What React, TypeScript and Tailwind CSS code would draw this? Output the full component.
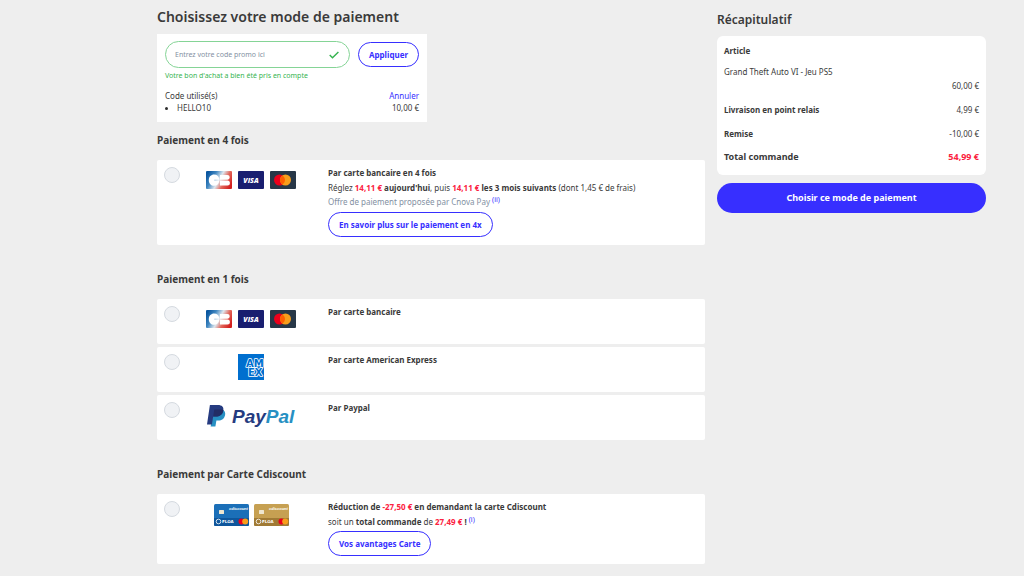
import type { ReactNode } from "react";

const pillClass =
  "h-[25px] rounded-full border border-[#372fff] bg-white px-2.5 text-[8px] font-bold text-[#372fff]";

function CbLogo() {
  return (
    <svg viewBox="0 0 26 18" className="h-[18px] w-[26px]" role="img" aria-label="CB">
      <defs>
        <linearGradient id="cb-bg" x1="0" y1="0.3" x2="1" y2="0.7">
          <stop offset="0" stopColor="#0b57a0" />
          <stop offset="0.25" stopColor="#3f86c0" />
          <stop offset="0.5" stopColor="#dfe7ee" />
          <stop offset="0.72" stopColor="#e2665a" />
          <stop offset="1" stopColor="#d3201f" />
        </linearGradient>
      </defs>
      <rect width="26" height="18" rx="1" fill="url(#cb-bg)" />
      <path d="M13.2 8.7H8.3v.8h4.9v.5c-.2 2.9-2.3 4.8-5.1 4.8-3 0-5.3-2.2-5.3-5.6s2.3-5.6 5.3-5.6c2.900 0 4.900 1.900 5.100 4.700z" fill="#fff" />
      <path d="M14 4h7.400a2.300 2.300 0 0 1 0 4.700H14zM14 9.500h7.400a2.500 2.500 0 0 1 0 5H14z" fill="#fff" />
    </svg>
  );
}

function VisaLogo() {
  return (
    <svg viewBox="0 0 26 18" className="h-[18px] w-[26px]" role="img" aria-label="Visa">
      <rect width="26" height="18" rx="1" fill="#191e70" />
      <text x="13" y="12" textAnchor="middle" fontSize="7" fontWeight="800" fontStyle="italic" fill="#fff" fontFamily="Open Sans, sans-serif">
        VISA
      </text>
    </svg>
  );
}

function MastercardLogo() {
  return (
    <svg viewBox="0 0 26 18" className="h-[18px] w-[26px]" role="img" aria-label="Mastercard">
      <rect width="26" height="18" rx="1" fill="#273747" />
      <circle cx="9.500" cy="9" r="5.500" fill="#eb001b" />
      <circle cx="15.500" cy="9" r="5.500" fill="#f79e1b" />
      <path d="M12.500 4.400a5.500 5.500 0 0 1 0 9.200a5.500 5.500 0 0 1 0-9.200z" fill="#ff5f00" />
    </svg>
  );
}

function BankCards() {
  return (
    <div className="flex gap-[6px]">
      <CbLogo />
      <VisaLogo />
      <MastercardLogo />
    </div>
  );
}

function AmexLogo() {
  return (
    <svg viewBox="0 0 26 26" className="size-[26px]" role="img" aria-label="American Express">
      <rect width="26" height="26" fill="#006fcf" />
      <g fontFamily="DejaVu Sans, sans-serif" fontWeight="700" fontSize="10" fill="#006fcf" stroke="#fff" strokeWidth="1.500" strokeLinejoin="round" paintOrder="stroke">
        <text x="8" y="12.500">AM</text>
        <text x="10" y="21.500">EX</text>
      </g>
    </svg>
  );
}

function PaypalLogo() {
  return (
    <svg viewBox="0 0 90 24" className="h-6 w-[90px]" role="img" aria-label="PayPal">
      <path d="M8 5.500h8.200c2.600 1.200 3.400 3.200 2.900 5.600-.8 3.900-3.400 5.500-6.700 5.500h-2l-1 6H4.600z" fill="#2790c3" />
      <path d="M3.900 1h8c4.100 0 6.100 2.100 5.400 5.500-.8 4-3.700 6-7.600 6H7.200L5.900 20.500H1z" fill="#253b80" />
      <path d="M8.300 5.500h7.900c.4.200.8.500 1.100.9-.6 4.100-3.600 6.100-7.600 6.100H7.200z" fill="#222d65" />
      <text x="26" y="19" fontSize="19" fontWeight="700" fontStyle="italic" fontFamily="Liberation Sans, sans-serif" fill="#253b80">
        Pay<tspan fill="#2790c3">Pal</tspan>
      </text>
    </svg>
  );
}

interface FloaCardProps {
  color: string;
  band: string;
}

function FloaCard({ color, band }: FloaCardProps) {
  return (
    <svg viewBox="0 0 35 22" className="h-[22px] w-[35px]" role="img" aria-label="Carte Cdiscount">
      <rect width="35" height="22" rx="1.500" fill={color} />
      <path d="M0 14h35v6.500a1.500 1.500 0 0 1-1.500 1.500h-32a1.500 1.500 0 0 1-1.500-1.500z" fill={band} />
      <rect x="5" y="6" width="5" height="4" rx="0.500" fill="#eee6d0" />
      <text x="15" y="6" fontSize="4" fontWeight="700" fontStyle="italic" fill="#fff" fontFamily="Liberation Sans, sans-serif">
        cdiscount
      </text>
      <circle cx="4.500" cy="17.500" r="2.300" fill="none" stroke="#fff" strokeWidth="0.800" />
      <text x="8" y="19" fontSize="4" fontWeight="700" fill="#fff" fontFamily="DejaVu Sans, sans-serif">
        FLOA
      </text>
      <circle cx="27.500" cy="17.500" r="3" fill="#eb001b" />
      <circle cx="31.200" cy="17.500" r="3" fill="#f79e1b" />
    </svg>
  );
}

interface OptionProps {
  id: string;
  logo: ReactNode;
  logoClass: string;
  title: ReactNode;
  className?: string;
  children?: ReactNode;
}

function PaymentOption({ id, logo, logoClass, title, className = "min-h-[45px]", children }: OptionProps) {
  return (
    <div className={`flex items-start rounded-xs bg-white px-[7px] ${className}`}>
      <input
        type="radio"
        id={id}
        name="payment"
        className="mt-[7px] size-4 shrink-0 appearance-none rounded-full border border-[#d5dae0] bg-[#f0f2f5] checked:border-4 checked:border-[#372fff]"
      />
      <div className={`ml-[26px] flex w-[90px] shrink-0 justify-center ${logoClass}`}>{logo}</div>
      <div className="ml-8 flex-1 pt-[7px] text-[8px]">
        <label htmlFor={id} className="block leading-3 font-bold">
          {title}
        </label>
        {children}
      </div>
    </div>
  );
}

function SectionTitle({ children }: { children: ReactNode }) {
  return <h2 className="mb-2.5 text-[10px] leading-5 font-bold">{children}</h2>;
}

function PromoCode() {
  return (
    <section className="w-[270px] bg-white px-2 pt-[7px] pb-2 text-[8px] leading-3">
      <form className="flex items-center gap-2" onSubmit={(e) => e.preventDefault()}>
        <div className="relative flex-1">
          <input
            type="text"
            aria-label="Code promo"
            placeholder="Entrez votre code promo ici"
            className="block h-[27px] w-full rounded-full border border-[#85d496] bg-white px-[9px] text-[7px] outline-none placeholder:text-[#8390a2]"
          />
          <svg viewBox="0 0 10 8" className="absolute top-[10px] right-[11px] h-2 w-2.5" fill="none" stroke="#35b34f" strokeWidth="1.400" aria-hidden="true">
            <path d="M.7 4l2.800 2.800L9.400.9" />
          </svg>
        </div>
        <button type="submit" className={pillClass}>
          Appliquer
        </button>
      </form>
      <p className="mt-0.5 text-[7px] text-[#35b34f]">Votre bon d'achat a bien été pris en compte</p>
      <div className="mt-2 flex justify-between">
        <span>Code utilisé(s)</span>
        <button type="button" className="text-[#372fff]">
          Annuler
        </button>
      </div>
      <ul className="flex">
        <li className="flex flex-1 items-center gap-[9px]">
          <span className="size-[3px] rounded-full bg-[#2d2d2d]" />
          HELLO10
        </li>
        <li>10,00 €</li>
      </ul>
    </section>
  );
}

function Summary() {
  return (
    <aside className="w-[269px] shrink-0 pt-2.5">
      <h2 className="text-[12px] leading-5 font-semibold">Récapitulatif</h2>
      <dl className="mt-1.5 rounded-md bg-white px-[7px] pt-[9px] pb-3 text-[8px] leading-3">
        <dt className="font-bold">Article</dt>
        <dd className="mt-[9px]">Grand Theft Auto VI - Jeu PS5</dd>
        <dd className="mt-0.5 text-right">60,00 €</dd>
        <div className="mt-3 flex justify-between">
          <dt className="font-bold">Livraison en point relais</dt>
          <dd>4,99 €</dd>
        </div>
        <div className="mt-3 flex justify-between">
          <dt className="font-bold">Remise</dt>
          <dd>-10,00 €</dd>
        </div>
        <div className="mt-[11px] flex justify-between text-[9px] font-bold">
          <dt>Total commande</dt>
          <dd className="text-[#fb2240]">54,99 €</dd>
        </div>
      </dl>
      <button type="button" className="mt-2 h-[30px] w-full rounded-full bg-[#372fff] text-[9px] font-bold text-white">
        Choisir ce mode de paiement
      </button>
    </aside>
  );
}

export default function App() {
  return (
    <div className="flex min-h-screen gap-3 bg-[#eee] pr-[38px] pl-[157px] font-['Noto_Sans','Open_Sans',sans-serif] text-[#3a3a3a]">
      <main className="min-w-0 flex-1 pt-1 pb-3">
        <h1 className="mb-1 text-[14px] leading-[26px] font-semibold">Choisissez votre mode de paiement</h1>
        <PromoCode />

        <section className="mt-2">
          <SectionTitle>Paiement en 4 fois</SectionTitle>
          <PaymentOption id="cb-4x" logo={<BankCards />} logoClass="mt-[11px]" title="Par carte bancaire en 4 fois" className="pb-2">
            <p className="mt-0.5 leading-[14px]">
              Réglez <b className="text-[#fb2240]">14,11 €</b> <b>aujourd'hui</b>, puis{" "}
              <b className="text-[#fb2240]">14,11 €</b> <b>les 3 mois suivants</b> (dont 1,45 € de frais)
            </p>
            <p className="leading-[14px] text-[#8390a2]">
              Offre de paiement proposée par Cnova Pay{" "}
              <sup className="text-[7px]">
                <a href="#cnova" className="text-[#372fff]">(ii)</a>
              </sup>
            </p>
            <button type="button" className={`mt-[3px] ${pillClass}`}>
              En savoir plus sur le paiement en 4x
            </button>
          </PaymentOption>
        </section>

        <section className="mt-6">
          <SectionTitle>Paiement en 1 fois</SectionTitle>
          <div className="flex flex-col gap-[3px]">
            <PaymentOption id="cb" logo={<BankCards />} logoClass="mt-[11px]" title="Par carte bancaire" />
            <PaymentOption id="amex" logo={<AmexLogo />} logoClass="mt-[7px]" title="Par carte American Express" />
            <PaymentOption id="paypal" logo={<PaypalLogo />} logoClass="mt-[9px]" title="Par Paypal" />
          </div>
        </section>

        <section className="mt-6">
          <SectionTitle>Paiement par Carte Cdiscount</SectionTitle>
          <PaymentOption
            id="cdiscount"
            logo={
              <div className="flex gap-[5px]">
                <FloaCard color="#1b6fb8" band="#0e569c" />
                <FloaCard color="#c6a052" band="#a07a35" />
              </div>
            }
            logoClass="mt-[10px]"
            title={
              <>
                Réduction de <span className="text-[#fb2240]">-27,50 €</span> en demandant la carte Cdiscount
              </>
            }
            className="pb-2"
          >
            <p className="mt-0.5 leading-[14px]">
              soit un <b>total commande</b> de <b className="text-[#fb2240]">27,49 €</b> <b>!</b>{" "}
              <sup className="text-[7px]">
                <a href="#carte" className="text-[#372fff]">(i)</a>
              </sup>
            </p>
            <button type="button" className={`mt-0.5 ${pillClass}`}>
              Vos avantages Carte
            </button>
          </PaymentOption>
        </section>
      </main>
      <Summary />
    </div>
  );
}
